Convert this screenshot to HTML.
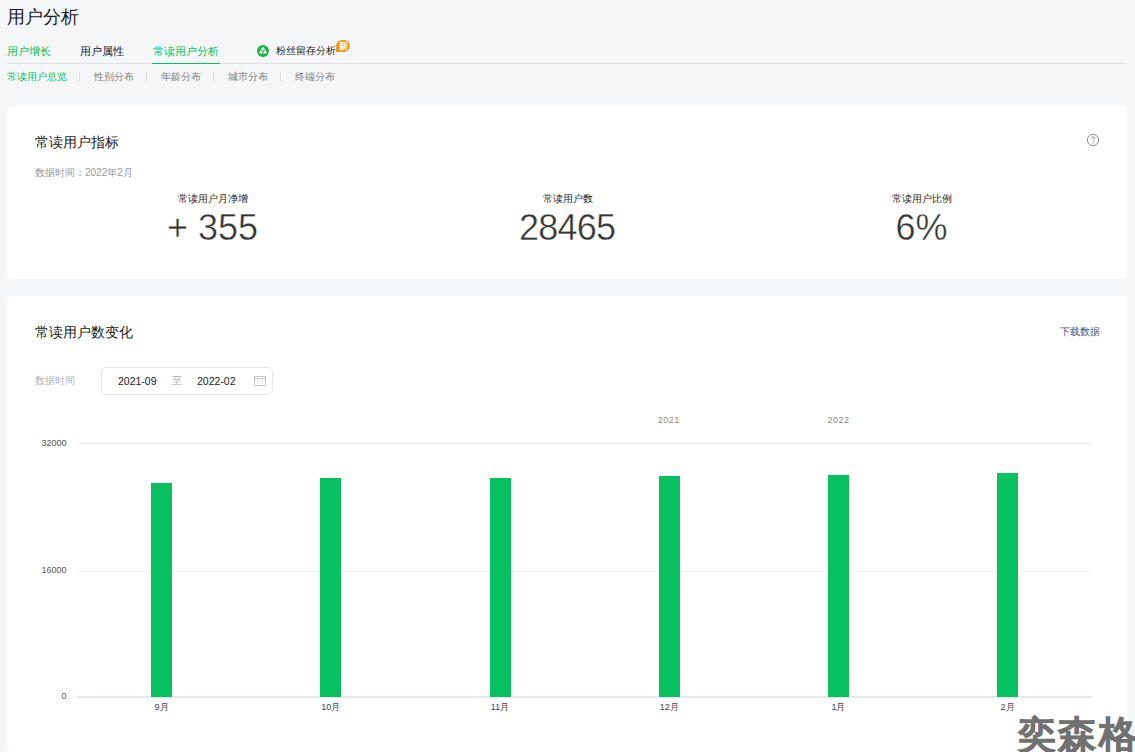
<!DOCTYPE html>
<html><head><meta charset="utf-8">
<style>
*{margin:0;padding:0;box-sizing:border-box}
html,body{width:1135px;height:752px;overflow:hidden;background:#f5f6f8;font-family:"Liberation Sans",sans-serif;color:#1a1a1a}
.a{position:absolute;white-space:nowrap;line-height:1}
.g{color:#07c160}
.card{position:absolute;left:7px;width:1120px;background:#fff;border-radius:5px}
</style></head><body>
<div class="a" style="left:7px;top:8px;font-size:18px;color:#1a1a1a">用户分析</div>

<!-- tabs -->
<div class="a g" style="left:7px;top:45.5px;font-size:11px">用户增长</div>
<div class="a" style="left:80px;top:45.5px;font-size:11px;color:#1a1a1a">用户属性</div>
<div class="a g" style="left:153px;top:45.5px;font-size:11px">常读用户分析</div>
<svg class="a" style="left:257px;top:45px" width="12" height="12" viewBox="0 0 12 12">
<circle cx="6" cy="6" r="6" fill="#1bb446"/>
<path d="M6 2.6 L8.9 7.7 L3.1 7.7 Z" fill="#fff" stroke="#fff" stroke-width="1.6" stroke-linejoin="round"/>
<path d="M4.3 4.9 L6 6.2 L7.7 4.9 M6 6.2 L6 8.6" fill="none" stroke="#1bb446" stroke-width="1.1"/>
</svg>
<div class="a" style="left:276px;top:46px;font-size:9.6px;color:#1a1a1a">粉丝留存分析</div>
<div class="a" style="left:336px;top:40px;width:14px;height:12px;border-radius:7px 7px 7px 1px;background:#f7961c;color:#fff;font-size:8.5px;font-weight:bold;text-align:center;line-height:12px">新</div>
<div class="a" style="left:7px;top:63px;width:1120px;height:1px;background:#dfe1e4"></div>
<div class="a" style="left:152px;top:62.5px;width:68px;height:1.5px;background:#07c160"></div>

<!-- subtabs -->
<div class="a g" style="left:7px;top:72px;font-size:10px">常读用户总览</div>
<div class="a" style="left:79px;top:72px;width:1px;height:9px;background:#e0e0e0"></div>
<div class="a" style="left:94px;top:72px;font-size:10px;color:#7f7f7f">性别分布</div>
<div class="a" style="left:146px;top:72px;width:1px;height:9px;background:#e0e0e0"></div>
<div class="a" style="left:161px;top:72px;font-size:10px;color:#7f7f7f">年龄分布</div>
<div class="a" style="left:213px;top:72px;width:1px;height:9px;background:#e0e0e0"></div>
<div class="a" style="left:228px;top:72px;font-size:10px;color:#7f7f7f">城市分布</div>
<div class="a" style="left:280px;top:72px;width:1px;height:9px;background:#e0e0e0"></div>
<div class="a" style="left:295px;top:72px;font-size:10px;color:#7f7f7f">终端分布</div>

<!-- card 1 -->
<div class="card" style="top:106px;height:173px"></div>
<div class="a" style="left:35px;top:134.5px;font-size:14px;color:#1a1a1a">常读用户指标</div>
<div class="a" style="left:35px;top:167.5px;font-size:10px;color:#999">数据时间：2022年2月</div>

<div class="a" style="left:35px;top:194px;width:355px;text-align:center;font-size:10px;color:#222">常读用户月净增</div>
<div class="a" style="left:35px;top:210px;width:355px;text-align:center;font-size:36px;color:#353535;-webkit-text-stroke:0.4px #fff">+ 355</div>
<div class="a" style="left:390px;top:194px;width:355px;text-align:center;font-size:10px;color:#222">常读用户数</div>
<div class="a" style="left:390px;top:210px;width:355px;text-align:center;font-size:36px;color:#353535;-webkit-text-stroke:0.4px #fff;letter-spacing:-0.8px;text-indent:-0.8px">28465</div>
<div class="a" style="left:744px;top:194px;width:355px;text-align:center;font-size:10px;color:#222">常读用户比例</div>
<div class="a" style="left:744px;top:210px;width:355px;text-align:center;font-size:36px;color:#353535;-webkit-text-stroke:0.4px #fff">6%</div>

<svg class="a" style="left:1086px;top:133px" width="14" height="14" viewBox="0 0 14 14">
<circle cx="7" cy="7" r="5.6" fill="none" stroke="#8c8c8c" stroke-width="1"/>
<path d="M5.4 5.6 Q5.4 4 7 4 Q8.6 4 8.6 5.4 Q8.6 6.3 7.6 6.8 Q7 7.1 7 8 L7 8.4" fill="none" stroke="#8c8c8c" stroke-width="1"/>
<circle cx="7" cy="9.9" r="0.6" fill="#8c8c8c"/>
</svg>

<!-- card 2 -->
<div class="card" style="top:296px;height:456px"></div>
<div class="a" style="left:35px;top:324.5px;font-size:14px;color:#1a1a1a">常读用户数变化</div>
<div class="a" style="left:1060px;top:327px;font-size:10px;color:#45587f">下载数据</div>
<div class="a" style="left:35px;top:376px;font-size:10px;color:#b2b2b2">数据时间</div>
<div class="a" style="left:101px;top:367px;width:172px;height:28px;border:1px solid #e3e6ea;border-radius:5px"></div>
<div class="a" style="left:118px;top:376px;font-size:10.5px;color:#1a1a1a">2021-09</div>
<div class="a" style="left:172px;top:376px;font-size:10px;color:#aaa">至</div>
<div class="a" style="left:197px;top:376px;font-size:10.5px;color:#1a1a1a">2022-02</div>

<!-- chart -->
<div class="a" style="left:77px;top:443px;width:1015px;height:1px;background:#efefef"></div>
<div class="a" style="left:77px;top:571px;width:1015px;height:1px;background:#f1f1f1"></div>
<div class="a" style="left:77px;top:696px;width:1015px;height:2px;background:#e5e7ef"></div>
<div class="a" style="left:151.1px;top:483.2px;width:21px;height:213.8px;background:#07c160"></div>
<div class="a" style="left:131.6px;top:703px;width:60px;text-align:center;font-size:9px;color:#444">9月</div>
<div class="a" style="left:320.3px;top:478.2px;width:21px;height:218.8px;background:#07c160"></div>
<div class="a" style="left:300.8px;top:703px;width:60px;text-align:center;font-size:9px;color:#444">10月</div>
<div class="a" style="left:489.5px;top:478.1px;width:21px;height:218.9px;background:#07c160"></div>
<div class="a" style="left:470.0px;top:703px;width:60px;text-align:center;font-size:9px;color:#444">11月</div>
<div class="a" style="left:658.7px;top:476.1px;width:21px;height:220.9px;background:#07c160"></div>
<div class="a" style="left:639.2px;top:703px;width:60px;text-align:center;font-size:9px;color:#444">12月</div>
<div class="a" style="left:827.9px;top:475.2px;width:21px;height:221.8px;background:#07c160"></div>
<div class="a" style="left:808.4px;top:703px;width:60px;text-align:center;font-size:9px;color:#444">1月</div>
<div class="a" style="left:997.1px;top:472.6px;width:21px;height:224.4px;background:#07c160"></div>
<div class="a" style="left:977.6px;top:703px;width:60px;text-align:center;font-size:9px;color:#444">2月</div>
<div class="a" style="left:0px;top:439px;width:66.5px;text-align:right;font-size:9px;color:#555">32000</div>
<div class="a" style="left:0px;top:566px;width:66.5px;text-align:right;font-size:9px;color:#555">16000</div>
<div class="a" style="left:0px;top:692px;width:66.5px;text-align:right;font-size:9px;color:#555">0</div>
<div class="a" style="left:638.8px;top:416px;width:60px;text-align:center;font-size:9px;color:#888;letter-spacing:0.5px">2021</div>
<div class="a" style="left:808.4px;top:416px;width:60px;text-align:center;font-size:9px;color:#888;letter-spacing:0.5px">2022</div>


<svg class="a" style="left:253px;top:375px" width="14" height="12" viewBox="0 0 14 12">
<rect x="1.5" y="1.5" width="11" height="9" fill="none" stroke="#c4c4c4" stroke-width="1"/>
<line x1="1.5" y1="3.5" x2="12.5" y2="3.5" stroke="#c4c4c4" stroke-width="1"/>
<rect x="4" y="5" width="1" height="1" fill="#c4c4c4"/><rect x="6.5" y="5" width="1" height="1" fill="#c4c4c4"/><rect x="9" y="5" width="1" height="1" fill="#c4c4c4"/>
<rect x="4" y="7.5" width="1" height="1" fill="#c4c4c4"/><rect x="6.5" y="7.5" width="1" height="1" fill="#c4c4c4"/><rect x="9" y="7.5" width="1" height="1" fill="#c4c4c4"/>
</svg>
<div class="a" style="left:1018px;top:716px;font-size:38px;color:#717171;letter-spacing:2.4px;-webkit-text-stroke:2px #717171">奕森格</div>

</body></html>
